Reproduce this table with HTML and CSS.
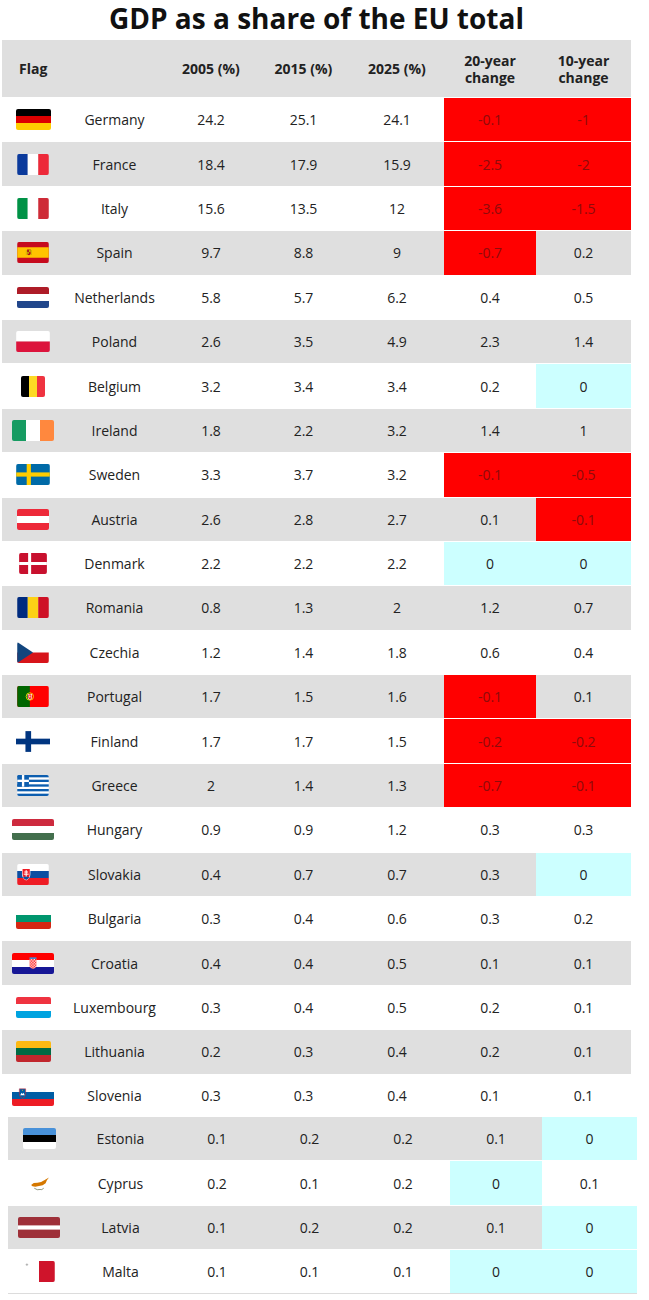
FILE: index.html
```html
<!DOCTYPE html>
<html lang="en">
<head>
<meta charset="utf-8">
<title>GDP as a share of the EU total</title>
<link rel="stylesheet" href="styles.css">
</head>
<body>
<div class="sheet">
  <h1 class="title">GDP as a share of the EU total</h1>
  <table class="tbl">
    <colgroup>
      <col class="c-flag"><col class="c-name"><col class="c-a"><col class="c-b"><col class="c-c"><col class="c-d"><col class="c-e">
    </colgroup>
    <thead>
      <tr>
        <th class="flagh">Flag</th>
        <th></th>
        <th>2005 (%)</th>
        <th>2015 (%)</th>
        <th>2025 (%)</th>
        <th>20-year<br>change</th>
        <th>10-year<br>change</th>
      </tr>
    </thead>
    <tbody>
      <tr class="r">
        <td><svg class="flag" width="35" height="21" viewBox="0 0 5 3"><rect width="5" height="1" fill="#000"/><rect y="1" width="5" height="1" fill="#dd0000"/><rect y="2" width="5" height="1" fill="#ffce00"/></svg></td>
        <td>Germany</td><td>24.2</td><td>25.1</td><td>24.1</td><td class="neg">-0.1</td><td class="neg">-1</td>
      </tr>
      <tr class="r alt">
        <td><svg class="flag" width="32" height="21" viewBox="0 0 3 2"><rect width="1" height="2" fill="#0b3a9c"/><rect x="1" width="1" height="2" fill="#fff"/><rect x="2" width="1" height="2" fill="#ed2939"/></svg></td>
        <td>France</td><td>18.4</td><td>17.9</td><td>15.9</td><td class="neg">-2.5</td><td class="neg">-2</td>
      </tr>
      <tr class="r">
        <td><svg class="flag" width="32" height="21" viewBox="0 0 3 2"><rect width="1" height="2" fill="#009246"/><rect x="1" width="1" height="2" fill="#fff"/><rect x="2" width="1" height="2" fill="#ce2b37"/></svg></td>
        <td>Italy</td><td>15.6</td><td>13.5</td><td>12</td><td class="neg">-3.6</td><td class="neg">-1.5</td>
      </tr>
      <tr class="r alt">
        <td><svg class="flag" width="32" height="21" viewBox="0 0 750 500"><rect width="750" height="500" fill="#c60b1e"/><rect y="125" width="750" height="250" fill="#ffc400"/><rect x="205" y="190" width="18" height="120" fill="#c8b100"/><rect x="330" y="190" width="18" height="120" fill="#c8b100"/><path d="M235 180h85v85q0 45-42 50q-43-5-43-50z" fill="#ad1519"/><rect x="278" y="180" width="42" height="60" fill="#c8b100"/><rect x="235" y="240" width="43" height="40" fill="#c8b100"/></svg></td>
        <td>Spain</td><td>9.7</td><td>8.8</td><td>9</td><td class="neg">-0.7</td><td>0.2</td>
      </tr>
      <tr class="r">
        <td><svg class="flag" width="32" height="21" viewBox="0 0 3 3" preserveAspectRatio="none"><rect width="3" height="1" fill="#ae1c28"/><rect y="1" width="3" height="1" fill="#fff"/><rect y="2" width="3" height="1" fill="#21468b"/></svg></td>
        <td>Netherlands</td><td>5.8</td><td>5.7</td><td>6.2</td><td>0.4</td><td>0.5</td>
      </tr>
      <tr class="r alt">
        <td><svg class="flag" width="34" height="21" viewBox="0 0 8 5"><rect width="8" height="2.5" fill="#fff"/><rect y="2.5" width="8" height="2.5" fill="#dc143c"/></svg></td>
        <td>Poland</td><td>2.6</td><td>3.5</td><td>4.9</td><td>2.3</td><td>1.4</td>
      </tr>
      <tr class="r">
        <td><svg class="flag" width="24" height="21" viewBox="0 0 3 3" preserveAspectRatio="none"><rect width="1" height="3" fill="#000"/><rect x="1" width="1" height="3" fill="#fdda24"/><rect x="2" width="1" height="3" fill="#ef3340"/></svg></td>
        <td>Belgium</td><td>3.2</td><td>3.4</td><td>3.4</td><td>0.2</td><td class="zero">0</td>
      </tr>
      <tr class="r alt">
        <td><svg class="flag" width="42" height="21" viewBox="0 0 3 1.5"><rect width="1" height="1.5" fill="#169b62"/><rect x="1" width="1" height="1.5" fill="#fff"/><rect x="2" width="1" height="1.5" fill="#ff883e"/></svg></td>
        <td>Ireland</td><td>1.8</td><td>2.2</td><td>3.2</td><td>1.4</td><td>1</td>
      </tr>
      <tr class="r">
        <td><svg class="flag" width="34" height="21" viewBox="0 0 16 10"><rect width="16" height="10" fill="#006aa7"/><rect x="5" width="2" height="10" fill="#fecc00"/><rect y="4" width="16" height="2" fill="#fecc00"/></svg></td>
        <td>Sweden</td><td>3.3</td><td>3.7</td><td>3.2</td><td class="neg">-0.1</td><td class="neg">-0.5</td>
      </tr>
      <tr class="r alt">
        <td><svg class="flag" width="32" height="21" viewBox="0 0 3 3" preserveAspectRatio="none"><rect width="3" height="1" fill="#ed2939"/><rect y="1" width="3" height="1" fill="#fff"/><rect y="2" width="3" height="1" fill="#ed2939"/></svg></td>
        <td>Austria</td><td>2.6</td><td>2.8</td><td>2.7</td><td>0.1</td><td class="neg">-0.1</td>
      </tr>
      <tr class="r">
        <td><svg class="flag" width="28" height="21" viewBox="0 0 37 28"><rect width="37" height="28" fill="#c8102e"/><rect x="12" width="4" height="28" fill="#fff"/><rect y="12" width="37" height="4" fill="#fff"/></svg></td>
        <td>Denmark</td><td>2.2</td><td>2.2</td><td>2.2</td><td class="zero">0</td><td class="zero">0</td>
      </tr>
      <tr class="r alt">
        <td><svg class="flag" width="32" height="21" viewBox="0 0 3 2"><rect width="1" height="2" fill="#002b7f"/><rect x="1" width="1" height="2" fill="#fcd116"/><rect x="2" width="1" height="2" fill="#ce1126"/></svg></td>
        <td>Romania</td><td>0.8</td><td>1.3</td><td>2</td><td>1.2</td><td>0.7</td>
      </tr>
      <tr class="r">
        <td><svg class="flag" width="32" height="21" viewBox="0 0 6 4"><rect width="6" height="2" fill="#fff"/><rect y="2" width="6" height="2" fill="#d7141a"/><path d="M0 0L3 2L0 4z" fill="#11457e"/></svg></td>
        <td>Czechia</td><td>1.2</td><td>1.4</td><td>1.8</td><td>0.6</td><td>0.4</td>
      </tr>
      <tr class="r alt">
        <td><svg class="flag" width="32" height="21" viewBox="0 0 600 400"><rect width="600" height="400" fill="#ff0000"/><rect width="240" height="400" fill="#006600"/><circle cx="240" cy="200" r="70" fill="none" stroke="#ffe000" stroke-width="16"/><path d="M200 150h80v65q0 45-40 45q-40 0-40-45z" fill="#fff"/><path d="M212 162h56v52q0 32-28 32q-28 0-28-32z" fill="#ff0000"/><rect x="228" y="180" width="24" height="40" fill="#fff"/></svg></td>
        <td>Portugal</td><td>1.7</td><td>1.5</td><td>1.6</td><td class="neg">-0.1</td><td>0.1</td>
      </tr>
      <tr class="r">
        <td><svg class="flag" width="34" height="21" viewBox="0 0 18 11"><rect width="18" height="11" fill="#fff"/><rect x="5" width="3" height="11" fill="#003580"/><rect y="4" width="18" height="3" fill="#003580"/></svg></td>
        <td>Finland</td><td>1.7</td><td>1.7</td><td>1.5</td><td class="neg">-0.2</td><td class="neg">-0.2</td>
      </tr>
      <tr class="r alt">
        <td><svg class="flag" width="32" height="21" viewBox="0 0 27 18"><rect width="27" height="18" fill="#fff"/><rect width="27" height="2" fill="#0d5eaf"/><rect y="4" width="27" height="2" fill="#0d5eaf"/><rect y="8" width="27" height="2" fill="#0d5eaf"/><rect y="12" width="27" height="2" fill="#0d5eaf"/><rect y="16" width="27" height="2" fill="#0d5eaf"/><rect width="10" height="10" fill="#0d5eaf"/><rect x="4" width="2" height="10" fill="#fff"/><rect y="4" width="10" height="2" fill="#fff"/></svg></td>
        <td>Greece</td><td>2</td><td>1.4</td><td>1.3</td><td class="neg">-0.7</td><td class="neg">-0.1</td>
      </tr>
      <tr class="r">
        <td><svg class="flag" width="42" height="21" viewBox="0 0 6 3"><rect width="6" height="1" fill="#cd2a3e"/><rect y="1" width="6" height="1" fill="#fff"/><rect y="2" width="6" height="1" fill="#436f4d"/></svg></td>
        <td>Hungary</td><td>0.9</td><td>0.9</td><td>1.2</td><td>0.3</td><td>0.3</td>
      </tr>
      <tr class="r alt">
        <td><svg class="flag" width="32" height="21" viewBox="0 0 900 600"><rect width="900" height="200" fill="#fff"/><rect y="200" width="900" height="200" fill="#0b4ea2"/><rect y="400" width="900" height="200" fill="#ee1c25"/><path d="M135 125h240v150q0 130-120 195q-120-65-120-195z" fill="#fff"/><path d="M152 142h206v133q0 112-103 173q-103-61-103-173z" fill="#ee1c25"/><rect x="240" y="175" width="30" height="200" fill="#fff"/><rect x="200" y="215" width="110" height="28" fill="#fff"/><rect x="185" y="275" width="140" height="30" fill="#fff"/><path d="M165 385q90-60 180 0q-30 40-90 63q-60-23-90-63z" fill="#0b4ea2"/></svg></td>
        <td>Slovakia</td><td>0.4</td><td>0.7</td><td>0.7</td><td>0.3</td><td class="zero">0</td>
      </tr>
      <tr class="r">
        <td><svg class="flag" width="35" height="21" viewBox="0 0 5 3"><rect width="5" height="1" fill="#fff"/><rect y="1" width="5" height="1" fill="#00966e"/><rect y="2" width="5" height="1" fill="#d62612"/></svg></td>
        <td>Bulgaria</td><td>0.3</td><td>0.4</td><td>0.6</td><td>0.3</td><td>0.2</td>
      </tr>
      <tr class="r alt">
        <td><svg class="flag" width="42" height="21" viewBox="0 0 1200 600"><defs><pattern id="hrchk" x="500" y="170" width="80" height="80" patternUnits="userSpaceOnUse"><rect width="80" height="80" fill="#fff"/><rect width="40" height="40" fill="#f00"/><rect x="40" y="40" width="40" height="40" fill="#f00"/></pattern></defs><rect width="1200" height="200" fill="#ff0000"/><rect y="200" width="1200" height="200" fill="#fff"/><rect y="400" width="1200" height="200" fill="#171796"/><rect x="500" y="125" width="200" height="45" fill="#3c8fdc"/><path d="M500 170h200v190q0 75-100 95q-100-20-100-95z" fill="url(#hrchk)"/></svg></td>
        <td>Croatia</td><td>0.4</td><td>0.4</td><td>0.5</td><td>0.1</td><td>0.1</td>
      </tr>
      <tr class="r">
        <td><svg class="flag" width="35" height="21" viewBox="0 0 5 3"><rect width="5" height="1" fill="#ef3340"/><rect y="1" width="5" height="1" fill="#fff"/><rect y="2" width="5" height="1" fill="#00a3e0"/></svg></td>
        <td>Luxembourg</td><td>0.3</td><td>0.4</td><td>0.5</td><td>0.2</td><td>0.1</td>
      </tr>
      <tr class="r alt">
        <td><svg class="flag" width="35" height="21" viewBox="0 0 5 3"><rect width="5" height="1" fill="#fdb913"/><rect y="1" width="5" height="1" fill="#006a44"/><rect y="2" width="5" height="1" fill="#c1272d"/></svg></td>
        <td>Lithuania</td><td>0.2</td><td>0.3</td><td>0.4</td><td>0.2</td><td>0.1</td>
      </tr>
      <tr class="r short">
        <td><svg class="flag" width="42" height="21" viewBox="0 0 12 6"><rect width="12" height="2" fill="#fff"/><rect y="2" width="12" height="2" fill="#005da4"/><rect y="4" width="12" height="2" fill="#ed1c24"/><path d="M2.1 1.1h1.8v1.4q0 1-0.9 1.35q-0.9-0.35-0.9-1.35z" fill="#005da4" stroke="#ed1c24" stroke-width="0.14"/><path d="M2.35 2.9l0.4-0.7l0.25 0.35l0.25-0.35l0.4 0.7z" fill="#fff"/><circle cx="3" cy="1.5" r="0.14" fill="#fd0"/></svg></td>
        <td>Slovenia</td><td>0.3</td><td>0.3</td><td>0.4</td><td>0.1</td><td>0.1</td>
      </tr>
    </tbody>
  </table>
  <table class="tbl lower">
    <colgroup>
      <col class="c-flag"><col class="c-name"><col class="c-a"><col class="c-b"><col class="c-c"><col class="c-d"><col class="c-e">
    </colgroup>
    <tbody>
      <tr class="r alt">
        <td><svg class="flag" width="33" height="21" viewBox="0 0 3 3" preserveAspectRatio="none"><rect width="3" height="1" fill="#4891d9"/><rect y="1" width="3" height="1" fill="#000"/><rect y="2" width="3" height="1" fill="#fff"/></svg></td>
        <td>Estonia</td><td>0.1</td><td>0.2</td><td>0.2</td><td>0.1</td><td class="zero">0</td>
      </tr>
      <tr class="r">
        <td><svg class="flag" width="32" height="21" viewBox="0 0 30 20"><rect width="30" height="20" fill="#fff"/><path d="M7.5 11.5L10 9.6L13.5 9.4L17 8.6L20 7L24.5 4.3L22.5 7L21.3 9.8L18.5 11.6L15 12.4L11.5 13L8.8 12.7z" fill="#d57800"/><path d="M10.5 14.5q3 2.2 5.5 1.2M19.5 14.5q-2 2-3.5 1.2" fill="none" stroke="#4e5b31" stroke-width="0.6"/></svg></td>
        <td>Cyprus</td><td>0.2</td><td>0.1</td><td>0.2</td><td class="zero">0</td><td>0.1</td>
      </tr>
      <tr class="r alt">
        <td><svg class="flag" width="42" height="21" viewBox="0 0 20 10"><rect width="20" height="10" fill="#9e3039"/><rect y="4" width="20" height="2" fill="#fff"/></svg></td>
        <td>Latvia</td><td>0.1</td><td>0.2</td><td>0.2</td><td>0.1</td><td class="zero">0</td>
      </tr>
      <tr class="r">
        <td><svg class="flag" width="32" height="21" viewBox="0 0 30 20"><rect width="15" height="20" fill="#fff"/><rect x="15" width="15" height="20" fill="#cf142b"/><rect x="2.3" y="3.2" width="2.4" height="0.7" fill="#a0a0a0"/><rect x="3.15" y="2.3" width="0.7" height="2.4" fill="#a0a0a0"/></svg></td>
        <td>Malta</td><td>0.1</td><td>0.1</td><td>0.1</td><td class="zero">0</td><td class="zero">0</td>
      </tr>
    </tbody>
  </table>
</div>
</body>
</html>
```

FILE: styles.css
```css
html, body {
  margin: 0;
  padding: 0;
  background: #fff;
}

body {
  font-family: "Open Sans", "Liberation Sans", sans-serif;
  color: #222;
}

.sheet {
  width: 629px;
  margin-left: 2px;
}

.title {
  margin: 0;
  height: 40px;
  font-size: 28px;
  font-weight: 700;
  line-height: 37px;
  text-align: center;
  color: #111;
}

.tbl {
  width: 629px;
  border-collapse: separate;
  border-spacing: 0;
  table-layout: fixed;
  font-size: 14px;
}

.tbl.lower {
  margin-left: 6px;
}

.c-flag { width: 62px; }
.c-name { width: 101px; }
.c-a { width: 92px; }
.c-b { width: 93px; }
.c-c { width: 94px; }
.c-d { width: 92px; }
.c-e { width: 95px; }

.tbl th {
  background: #dfdfdf;
  height: 57px;
  padding: 0;
  font-weight: 700;
  font-size: 14px;
  line-height: 17px;
  text-align: center;
  vertical-align: middle;
  color: #222;
}

.tbl th.flagh {
  text-align: left;
  padding-left: 17px;
}

.tbl tr.r {
  height: 44.4px;
}

.tbl tr.short {
  height: 42.4px;
}

.tbl td {
  padding: 0;
  border-top: 1px solid #fff;
  text-align: center;
  vertical-align: middle;
  line-height: 19px;
}

.tbl tr.alt td {
  background: #dfdfdf;
}

.tbl tr td.neg {
  background: #ff0000;
  color: #8e0b0b;
}

.tbl tr td.zero {
  background: #ccffff;
}

.tbl.lower tr:last-child td {
  border-bottom: 1px solid #dcdcdc;
}

.flag {
  display: block;
  margin: 0 auto;
  border-radius: 2px;
}
```
